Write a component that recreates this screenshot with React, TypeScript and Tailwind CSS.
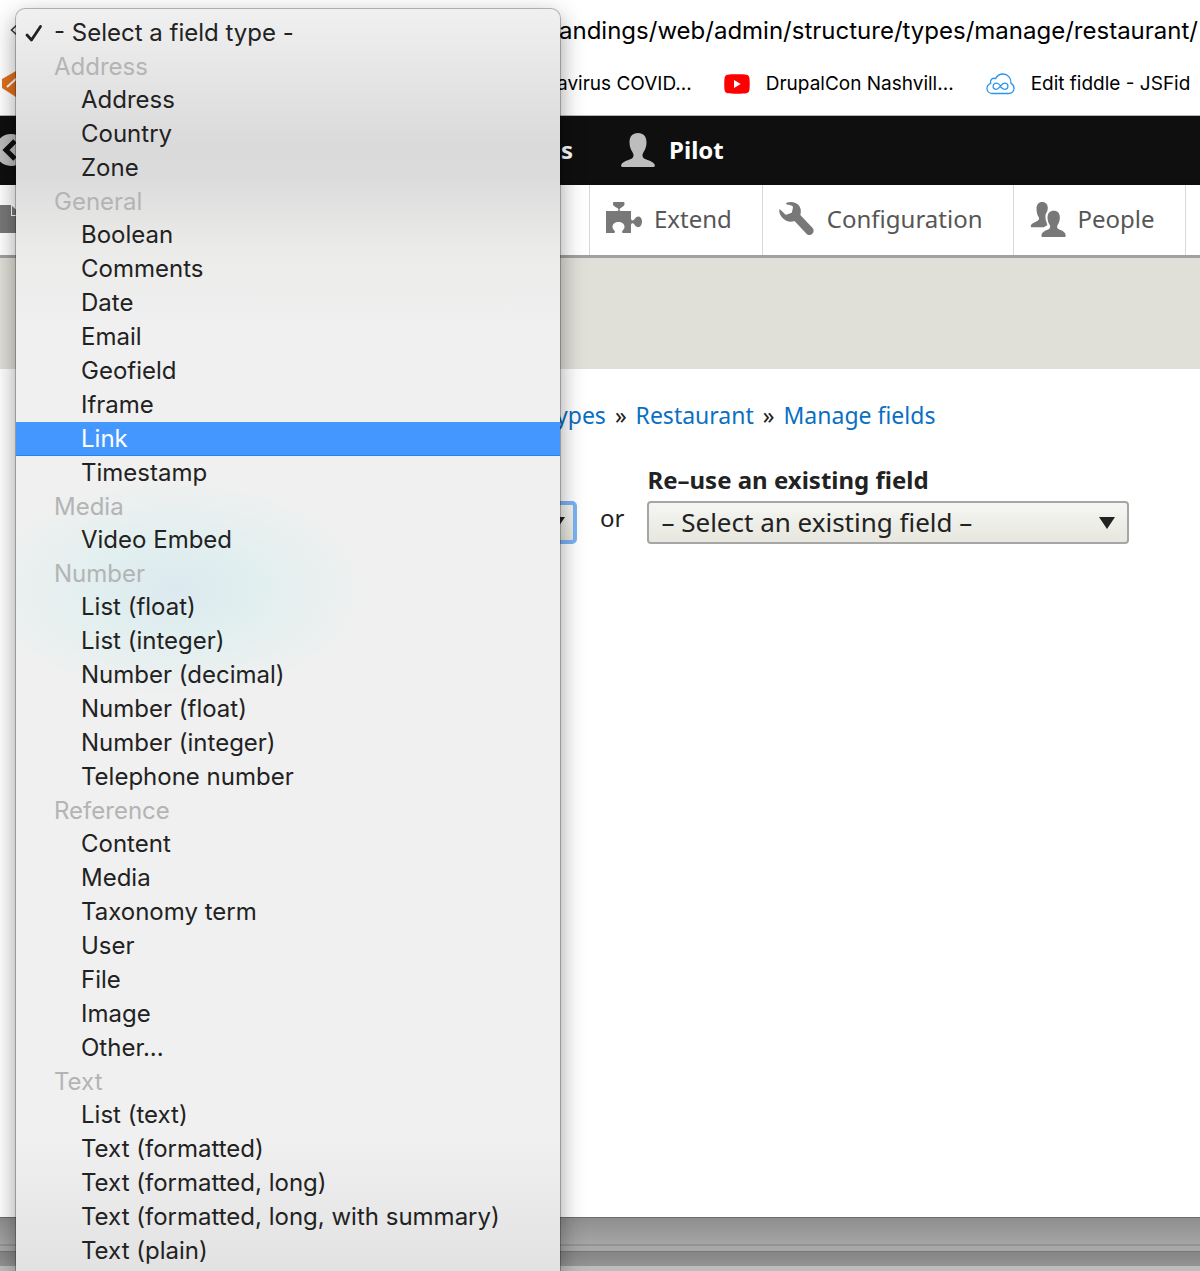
import React from "react";

type Group = { label: string; options: string[] };

const groups: Group[] = [
  { label: "Address", options: ["Address", "Country", "Zone"] },
  {
    label: "General",
    options: ["Boolean", "Comments", "Date", "Email", "Geofield", "Iframe", "Link", "Timestamp"],
  },
  { label: "Media", options: ["Video Embed"] },
  {
    label: "Number",
    options: [
      "List (float)",
      "List (integer)",
      "Number (decimal)",
      "Number (float)",
      "Number (integer)",
      "Telephone number",
    ],
  },
  {
    label: "Reference",
    options: ["Content", "Media", "Taxonomy term", "User", "File", "Image", "Other..."],
  },
  {
    label: "Text",
    options: [
      "List (text)",
      "Text (formatted)",
      "Text (formatted, long)",
      "Text (formatted, long, with summary)",
      "Text (plain)",
    ],
  },
];

function PersonIcon() {
  return (
    <svg viewBox="0 0 34 34" className="h-[34px] w-[34px]" fill="#bdbdbd" aria-hidden="true">
      <path d="M17 0c-5.600 0-8.500 3.700-8.500 9.200 0 4.200 1.200 7.200 2.900 9.800 1.700 2.700 1.600 5.200-.9 6.700C7.200 27.400.4 28.600.1 32.600c-.1.900.4 1.300 1.400 1.300h31c1 0 1.500-.4 1.400-1.300-.3-4-7.100-5.200-10.400-6.900-2.500-1.500-2.600-4-.9-6.700 1.700-2.600 2.900-5.600 2.900-9.800C25.500 3.700 22.600 0 17 0z" />
    </svg>
  );
}

function PuzzleIcon() {
  return (
    <svg viewBox="0 0 36 36" className="h-9 w-9" fill="#787878" aria-hidden="true">
      <path d="M0 10h10.500c1.600 0 2.300-.7 1.800-2.100C11.700 6.200 7 5.600 7 2.900v-.6C7 1.400 7.500 1 8.300 1h8.900c.8 0 1.300.4 1.300 1.300v.6c0 2.700-4.200 3.300-4.800 5-.5 1.400.2 2.100 1.800 2.100H25v7.300c0 1.900 1.300 2.700 2.700 1.700 1.300-1 2-3.500 4.300-3.500 2.600 0 4 2.100 4 5s-1.400 5.700-4 5.700c-2.300 0-3-2.500-4.300-3.500-1.400-1-2.700-.2-2.700 1.700V32h-7.500c-1.500 0-2-.6-1.300-1.700.8-1.300 2.300-2.300 2.300-4.500 0-3-2.600-4.800-6-4.800s-6 1.800-6 4.800c0 2.200 1.500 3.200 2.300 4.500.7 1.100.2 1.700-1.300 1.700H0z" />
    </svg>
  );
}

function WrenchIcon() {
  return (
    <svg viewBox="0 0 36 36" className="h-9 w-9" fill="#787878" aria-hidden="true">
      <path d="M7.600 1.800C11.500.2 16 .6 19 3.600c3.100 3.100 3.300 7 2.300 10.400L33.200 26.400c1.900 2 1.900 4.500.2 6.300-1.800 1.700-4.300 1.600-6.200-.3L15.500 20c-3.500 1.400-7.800 1-11.100-2.200C1.200 14.700-.4 11.200.6 7.900l5.500 5.300c.5.5 1.200.6 1.800.4l4-1.500c.6-.2 1-.6 1.100-1.200l.9-4.200c.1-.6 0-1.200-.6-1.600-1.500-1.100-3.500-1.300-5.500-1.700-.8-.2-.9-1.300-.2-1.600z" />
    </svg>
  );
}

function PeopleIcon() {
  return (
    <svg viewBox="0 0 36 37" className="h-9 w-9" fill="#787878" aria-hidden="true">
      <path d="M12 1c3.700 0 5.800 2.500 5.800 6 0 1.600-.3 3-.9 4.300-1.300 1.500-1.700 3.300-1.500 6 .1 2.300.9 4.300 1.600 6l.3 1.600L13.500 27H.5c-.6-3.600 2.300-4.400 5-5.700 2.800-1.200 4.300-2.400 2.600-5.300-1.300-2-1.900-4.600-1.900-8.500C6.200 3.600 8.300 1 12 1z" />
      <path d="M24 10c4 0 6.200 2.800 6.200 6.700 0 3-.8 5.500-2 7.400-1.400 2.200-1 4 .9 5 2.800 1.500 7.200 2.200 7 6.800 0 .7-.4 1-1 1H12.300c-.7 0-1-.3-1-1 0-4.600 4.500-5.300 7.200-6.800 1.900-1 2.300-2.800 1-5-1.300-1.900-2-4.400-2-7.400 0-3.900 2.500-6.700 6.500-6.700z" />
    </svg>
  );
}

function YoutubeIcon() {
  return (
    <svg viewBox="0 0 26 20" className="h-5 w-[26px] shrink-0" aria-hidden="true">
      <path fill="#ff0000" d="M3.500.8C7 .2 19 .2 22.500.8c1.600.3 2.500 1.200 2.800 2.700.6 3 .6 10 0 13-.3 1.500-1.200 2.400-2.800 2.700-3.500.6-15.500.6-19 0-1.600-.3-2.500-1.200-2.800-2.700-.6-3-.6-10 0-13C1 2 1.900 1.100 3.500.8z" />
      <path fill="#fff" d="M10 6v8l6.700-4z" />
    </svg>
  );
}

function FiddleIcon() {
  return (
    <svg viewBox="0 0 29 22" className="h-[22px] w-[29px] shrink-0" fill="none" stroke="#2a94ee" strokeWidth="1.300" aria-hidden="true">
      <path d="M6.500 20.500h16c3.300 0 5.500-2.300 5.500-5.300 0-2.200-1.200-4-3-4.900C25.300 5 21.600 1 17 1c-3.400 0-6 1.800-7.400 4.600C7 4.500 4.300 6.300 4.500 9.200c0 .5.100.8.200 1.100C2.500 11.100 1 13 1 15.400c0 3 2.500 5.100 5.500 5.100z" />
      <path d="M14.500 12.600c-1.500-1.700-2.600-2.500-4-2.500-2 0-3.400 1.300-3.400 3.100s1.400 3.100 3.400 3.100c3.200 0 4.800-6.200 8-6.200 2 0 3.400 1.300 3.400 3.100s-1.400 3.100-3.400 3.100c-1.400 0-2.500-.9-4-2.600" />
    </svg>
  );
}

function OptionRow({ name }: { name: string }) {
  const active = name === "Link";
  return (
    <button
      type="button"
      role="option"
      aria-selected={active}
      className={
        active
          ? "block h-[34px] w-full bg-[#4497ff] pl-[65px] text-left text-white shadow-[inset_0_-1px_#1d86fb]"
          : "block h-[34px] w-full pl-[65px] text-left text-[#222]"
      }
    >
      {name}
    </button>
  );
}

function FieldTypeMenu() {
  return (
    <div
      role="listbox"
      aria-label="Add a new field"
      className="absolute top-[9px] bottom-0 left-4 z-10 w-[544px] overflow-hidden rounded-t-[9px] bg-[#f0f0f0] bg-[radial-gradient(ellipse_190px_110px_at_160px_580px,#dceaf0_0%,#e2efef_45%,#f0f0f000_100%),linear-gradient(to_bottom,#f0f0f0_0px,#e8e8e8_50px,#dadada_135px,#dbdbdb_165px,#ebebea_240px,#f0f0f0_320px,#f0f0f0_1130px,#e2e2e2_1262px)] pt-[7px] font-[Inter,sans-serif] text-[24px] leading-[34px] shadow-[0_0_0_1px_rgba(0,0,0,0.25),0_8px_24px_rgba(0,0,0,0.4)]"
    >
      <button type="button" role="option" aria-selected="false" className="flex h-[34px] w-full items-center pl-2 text-left text-[#222]">
        <svg viewBox="0 0 20 20" className="h-5 w-5" fill="none" stroke="#222" strokeWidth="2.800" strokeLinecap="round" strokeLinejoin="round" aria-hidden="true">
          <path d="M3 12l4.500 5L16.500 3.500" />
        </svg>
        <span className="pl-2.5">- Select a field type -</span>
      </button>
      {groups.map((group) => (
        <div role="group" aria-label={group.label} key={group.label}>
          <div className="h-[33px] pl-[38px] text-[#b3b4b4]">{group.label}</div>
          {group.options.map((name) => (
            <OptionRow key={name} name={name} />
          ))}
        </div>
      ))}
    </div>
  );
}

function TrayItem({ icon, label }: { icon: React.ReactNode; label: string }) {
  return (
    <a href="#" className="flex shrink-0 items-center gap-3 border-l border-[#d8d8d8] pr-[30px] pb-0.5 pl-4 text-[24px] text-[#565656]">
      {icon}
      <span>{label}</span>
    </a>
  );
}

export default function App() {
  return (
    <div className="relative flex min-h-screen flex-col overflow-hidden bg-white font-['Noto_Sans',sans-serif] text-[#222]">
      <header className="font-[Inter,sans-serif] text-black">
        <div className="flex h-[62px] items-center">
          <svg viewBox="0 0 10 16" className="ml-2.5 h-4 w-2.5" fill="none" stroke="#333" strokeWidth="1.500" aria-hidden="true">
            <path d="M8 1L1.500 7 8 13" />
          </svg>
          <span className="ml-[539px] text-[24px] whitespace-nowrap">andings/web/admin/structure/types/manage/restaurant/</span>
        </div>
        <nav aria-label="Bookmarks" className="flex h-[54px] items-start border-b border-[#b5b5b5] pt-2 text-[19px] leading-7 whitespace-nowrap">
          <svg viewBox="0 0 28 28" className="ml-0.5 h-7 w-7 shrink-0" aria-hidden="true">
            <path fill="#e0701f" d="M0 9l14-8 14 8v9l-14 9L0 18z" />
            <path fill="none" stroke="#fff" strokeWidth="2" d="M5 17L15 8" />
          </svg>
          <a href="#" className="ml-[527px]">avirus COVID...</a>
          <a href="#" className="ml-8 flex items-center gap-4"><YoutubeIcon />DrupalCon Nashvill...</a>
          <a href="#" className="ml-8 flex items-center gap-4"><FiddleIcon />Edit fiddle - JSFid</a>
        </nav>
      </header>

      <nav aria-label="Toolbar" className="flex h-[69px] items-center bg-[#0f0f0f] pb-0.5 text-[24px] font-bold text-white">
        <svg viewBox="0 0 32 32" className="-ml-[5px] h-8 w-8 shrink-0" aria-hidden="true">
          <circle cx="16" cy="16" r="16" fill="#bdbdbd" />
          <path d="M20 7l-9 9 9 9" fill="none" stroke="#0f0f0f" strokeWidth="5" />
        </svg>
        <a href="#" className="ml-[534px]">s</a>
        <a href="#" className="ml-12 flex items-center gap-3.5"><PersonIcon />Pilot</a>
      </nav>

      <nav aria-label="Administration" className="flex h-[73px] border-b-[3px] border-[#a0a09e] bg-white shadow-[0_2px_8px_rgba(0,0,0,0.2)]">
        <svg viewBox="0 0 24 30" className="mt-5 mr-[565px] h-[30px] w-6 shrink-0" aria-hidden="true">
          <path fill="#787878" d="M0 0h11v11h13v17H0z" />
          <path fill="#787878" d="M12 1l10 9H12z" />
        </svg>
        <TrayItem icon={<PuzzleIcon />} label="Extend" />
        <TrayItem icon={<WrenchIcon />} label="Configuration" />
        <TrayItem icon={<PeopleIcon />} label="People" />
        <div className="border-l border-[#d8d8d8]" />
      </nav>
      <div className="h-[111px] bg-[#e0e0d8]" />

      <main className="flex-1 pt-[30px]">
        <nav aria-label="Breadcrumb" className="flex gap-[9px] pl-[556px] text-[23px] leading-8 whitespace-nowrap text-[#0a6fc2]">
          <a href="#">ypes</a>
          <span className="text-[#222]">»</span>
          <a href="#">Restaurant</a>
          <span className="text-[#222]">»</span>
          <a href="#">Manage fields</a>
        </nav>
        <form className="mt-8 flex items-end pl-8">
          <div className="relative">
            <select aria-label="Add a new field" className="block h-[43px] w-[545px] appearance-none rounded-[5px] border-4 border-[#7ab5f5] bg-linear-to-b from-[#f6f6f3] to-[#e7e7df] px-3 text-transparent">
              <option>- Select a field type -</option>
            </select>
            <svg viewBox="0 0 16 12" className="pointer-events-none absolute top-4 right-3 h-3 w-4" aria-hidden="true">
              <path fill="#222" d="M0 0h16L8 12z" />
            </svg>
          </div>
          <span className="ml-[23px] pb-2.5 text-[24px] leading-8">or</span>
          <div className="ml-[23px]">
            <label htmlFor="existing" className="block pb-1 text-[24px] leading-[34px] font-bold whitespace-nowrap">Re–use an existing field</label>
            <div className="relative">
              <select id="existing" className="block h-[43px] w-[482px] appearance-none rounded-[4px] border-2 border-[#a6a6a6] bg-linear-to-b from-[#f6f6f3] to-[#e7e7df] pl-3 text-[26px] text-[#222]">
                <option>– Select an existing field –</option>
              </select>
              <svg viewBox="0 0 16 12" className="pointer-events-none absolute top-4 right-3.5 h-3 w-4" aria-hidden="true">
                <path fill="#222" d="M0 0h16L8 12z" />
              </svg>
            </div>
          </div>
        </form>
      </main>

      <footer className="h-[54px] border-t border-[#6c6c6c]">
        <div className="h-[26px] bg-linear-to-b from-[#8e8e8e] to-[#a5a5a5]" />
        <div className="h-[7px] border-t-2 border-[#939393] bg-[#a8a8a8]" />
        <div className="h-[15px] border-t border-[#777] bg-linear-to-b from-[#858585] to-[#939393]" />
        <div className="h-[5px] bg-[#bdbdbd]" />
      </footer>

      <FieldTypeMenu />
    </div>
  );
}
